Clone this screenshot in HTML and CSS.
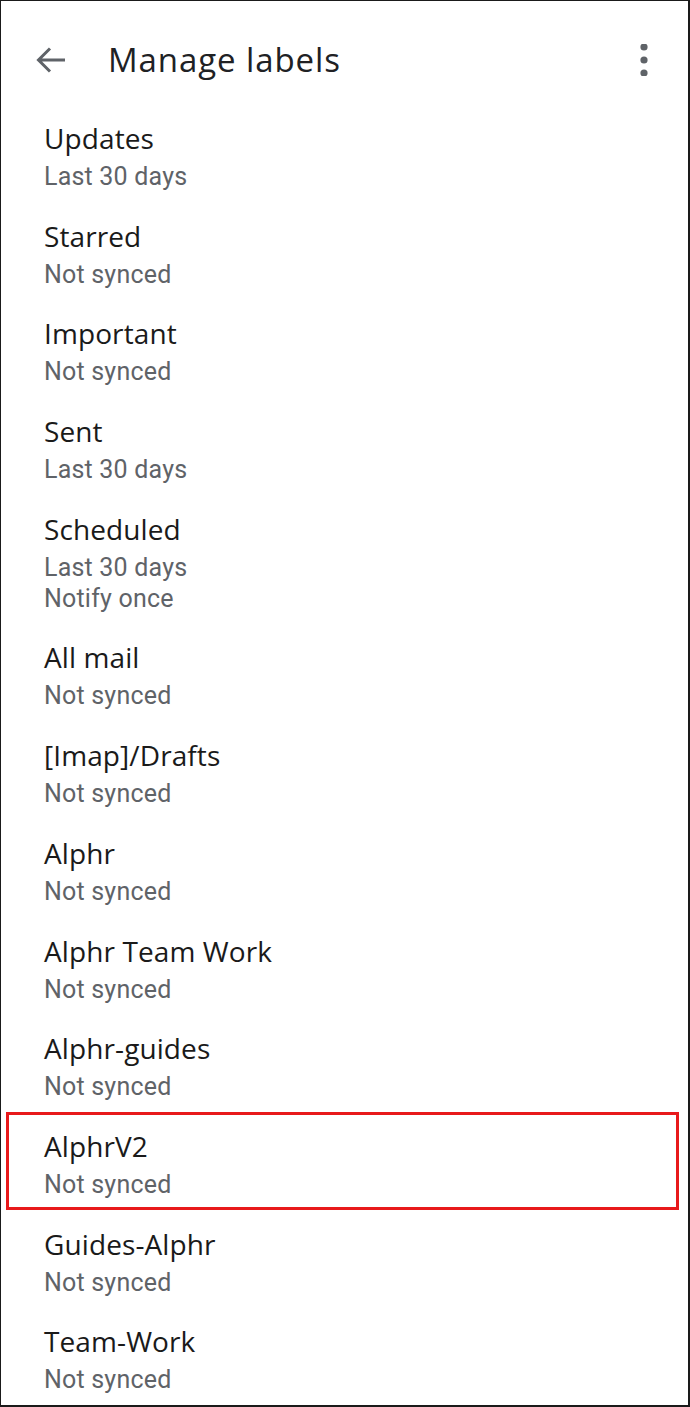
FILE: index.html
```html
<!DOCTYPE html>
<html lang="en">
<head>
    <meta charset="UTF-8">
    <meta name="viewport" content="width=device-width, initial-scale=1.0">
    <title>Manage labels</title>
    <link rel="stylesheet" href="styles.css">
</head>
<body>

    <div class="screen">
        <header class="top-bar">
            <button class="icon-btn back" aria-label="Back">
                <svg width="32" height="32" viewBox="0 0 32 32">
                    <path d="M30 16H4M15 4.5L3.5 16L15 27.5" fill="none" stroke="#5f6368" stroke-width="3"/>
                </svg>
            </button>
            <h1 class="title">Manage labels</h1>
            <button class="icon-btn more" aria-label="More options">
                <svg width="10" height="32" viewBox="0 0 10 32">
                    <circle cx="5" cy="3" r="3.6" fill="#5f6368"/>
                    <circle cx="5" cy="16" r="3.6" fill="#5f6368"/>
                    <circle cx="5" cy="29" r="3.6" fill="#5f6368"/>
                </svg>
            </button>
        </header>

        <ul class="labels">
            <li class="label"><span class="name">Updates</span><span class="info">Last 30 days</span></li>
            <li class="label"><span class="name">Starred</span><span class="info">Not synced</span></li>
            <li class="label"><span class="name">Important</span><span class="info">Not synced</span></li>
            <li class="label"><span class="name">Sent</span><span class="info">Last 30 days</span></li>
            <li class="label"><span class="name">Scheduled</span><span class="info">Last 30 days</span><span class="info">Notify once</span></li>
            <li class="label"><span class="name">All mail</span><span class="info">Not synced</span></li>
            <li class="label"><span class="name">[Imap]/Drafts</span><span class="info">Not synced</span></li>
            <li class="label"><span class="name">Alphr</span><span class="info">Not synced</span></li>
            <li class="label"><span class="name">Alphr Team Work</span><span class="info">Not synced</span></li>
            <li class="label"><span class="name">Alphr-guides</span><span class="info">Not synced</span></li>
            <li class="label highlight"><span class="name">AlphrV2</span><span class="info">Not synced</span></li>
            <li class="label"><span class="name">Guides-Alphr</span><span class="info">Not synced</span></li>
            <li class="label"><span class="name">Team-Work</span><span class="info">Not synced</span></li>
        </ul>
    </div>

</body>
</html>
```

FILE: styles.css
```css
* {
    box-sizing: border-box;
}

body {
    margin: 0;
    background: #fff;
    font-family: 'Roboto', 'Noto Sans', sans-serif;
    color: #202124;
}

.screen {
    height: 1407px;
    overflow: hidden;
    border-style: solid;
    border-color: #1a1a1a;
    border-width: 1px 2px 2px 1px;
}

.top-bar {
    height: 103px;
    padding-top: 16px;
    display: flex;
    align-items: center;
}

.icon-btn {
    border: none;
    background: none;
    padding: 0;
    display: flex;
    align-items: center;
    justify-content: center;
}

.back {
    width: 32px;
    height: 32px;
    margin-left: 34px;
    margin-top: -2px;
}

.title {
    margin: -3px 0 0 41px;
    font-family: 'Open Sans', 'Roboto', sans-serif;
    font-size: 33px;
    font-weight: 400;
    letter-spacing: 0.9px;
    color: #202124;
    flex: 1;
}

.more {
    width: 10px;
    height: 32px;
    margin-right: 39px;
    margin-top: -1px;
}

.labels {
    list-style: none;
    margin: 0;
    padding: 0;
}

.label {
    display: flex;
    flex-direction: column;
    margin: 0 9px 0 5px;
    padding: 12px 0 6.7px 35px;
    border: 3px solid transparent;
}

.label.highlight {
    border-color: #e8191b;
}

.name {
    font-family: 'Open Sans', 'Roboto', sans-serif;
    font-size: 28px;
    font-weight: 500;
    line-height: 38px;
    margin-bottom: 4px;
    color: #1a1a1a;
    letter-spacing: 0.1px;
}

.info {
    font-size: 25px;
    line-height: 31px;
    color: #5f6368;
    letter-spacing: 0.2px;
}
```
